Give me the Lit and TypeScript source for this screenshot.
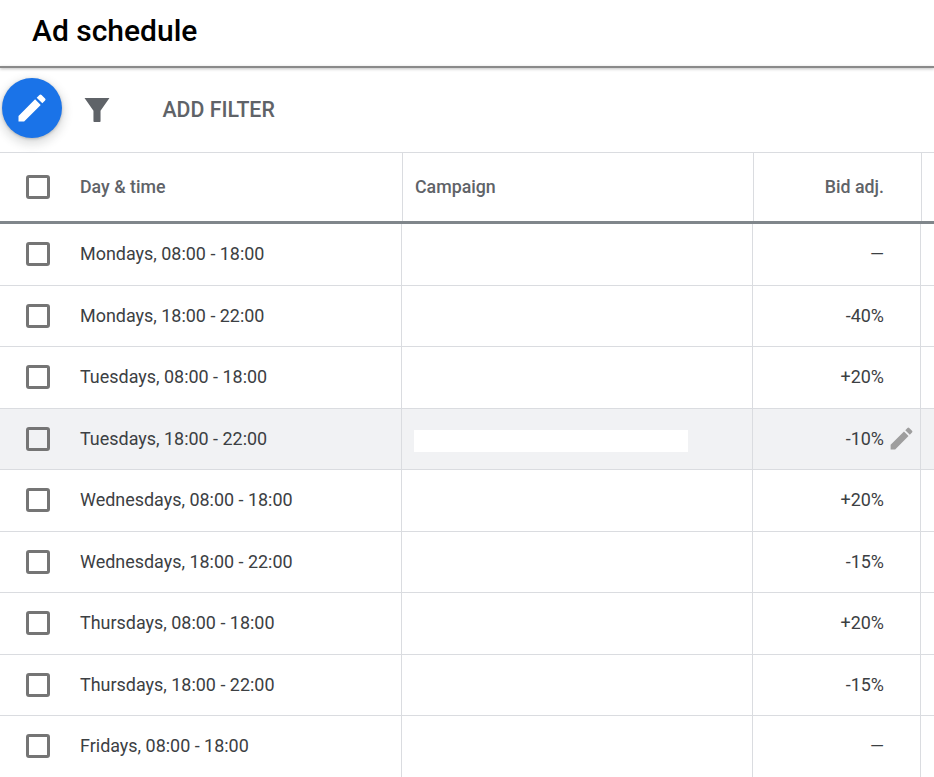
import { LitElement, html, css, svg } from "lit";
import { customElement } from "lit/decorators.js";

const PENCIL = "M3 17.25V21h3.75L17.81 9.94l-3.75-3.75L3 17.25zM20.71 7.04a1 1 0 0 0 0-1.41l-2.34-2.34a1 1 0 0 0-1.41 0l-1.83 1.83 3.75 3.75 1.83-1.83z";
const pencil = (cls: string) => html`<svg class=${cls} viewBox="0 0 24 24">${svg`<path d=${PENCIL}></path>`}</svg>`;

const ROWS: [string, string][] = [
  ["Mondays, 08:00 - 18:00", "—"],
  ["Mondays, 18:00 - 22:00", "-40%"],
  ["Tuesdays, 08:00 - 18:00", "+20%"],
  ["Tuesdays, 18:00 - 22:00", "-10%"],
  ["Wednesdays, 08:00 - 18:00", "+20%"],
  ["Wednesdays, 18:00 - 22:00", "-15%"],
  ["Thursdays, 08:00 - 18:00", "+20%"],
  ["Thursdays, 18:00 - 22:00", "-15%"],
  ["Fridays, 08:00 - 18:00", "—"],
];

@customElement("app-root")
export class AppRoot extends LitElement {
  static styles = css`
    :host { display: block; width: 934px; height: 777px; overflow: hidden; background: #fff; font-family: Roboto, "Liberation Sans", sans-serif; color: #3c4043; }
    .title { height: 66px; box-sizing: border-box; padding: 13px 0 0 32px; font-size: 30px; line-height: 36px; font-weight: 500; color: #000; }
    .rule { height: 2px; background: #8a8a8a; box-shadow: 0 1px 3px rgba(0,0,0,.3); position: relative; }
    .toolbar { height: 84px; display: flex; align-items: center; border-bottom: 1px solid #dadce0; }
    .fab { width: 60px; height: 60px; margin: -4px 0 0 2px; border-radius: 50%; background: #1a73e8; display: flex; align-items: center; justify-content: center; box-shadow: 0 4px 8px 3px rgba(60,64,67,.15), 0 1px 3px rgba(60,64,67,.3); flex: none; }
    .fab svg { width: 36px; height: 36px; fill: #fff; }
    .funnel { width: 34px; height: 34px; fill: #5f6368; margin-left: 18px; flex: none; }
    .add { margin-left: 48.5px; padding-bottom: 2px; font-size: 21.3px; font-weight: 500; color: #5f6368; }
    .head, .row { display: grid; }
    .head { grid-template-columns: 403px 351px 168px 12px; height: 68px; border-bottom: 3px solid #80868b; font-size: 17.8px; font-weight: 500; color: #5f6368; }
    .cell { box-sizing: border-box; display: flex; align-items: center; border-right: 1px solid #dadce0; min-width: 0; }
    .cell.last { border-right: 0; }
    .first { padding-left: 26px; gap: 30px; }
    .second { padding-left: 12px; }
    .num { justify-content: flex-end; padding-right: 37px; position: relative; }
    .head .label, .head .num { padding-bottom: 2px; }
    .row { height: 61.5px; box-sizing: border-box; border-bottom: 1px solid #dadce0; grid-template-columns: 402px 351px 168px 13px; font-size: 17.95px; color: #3c4043; font-weight: 400; }
    .row .label, .row .num { padding-bottom: 1px; }
    .row .num { padding-right: 36px; }
    .row.hover { background: #f1f2f4; }
    .box { width: 18px; height: 18px; border: 3px solid #757575; border-radius: 3px; flex: none; }
    .blank { width: 274px; height: 22px; background: #fff; margin-top: 4px; }
    .edit { position: absolute; right: 4.5px; top: 50%; margin-top: -14.5px; width: 29px; height: 29px; fill: #9e9e9e; }
  `;

  render() {
    return html`
      <div class="title">Ad schedule</div>
      <div class="rule"></div>
      <div class="toolbar">
        <div class="fab">${pencil("")}</div>
        <svg class="funnel" viewBox="0 0 24 24"><path d="M3.2 3.5h17.6L14.5 12.5V20a.5.5 0 0 1-.5.5h-4a.5.5 0 0 1-.5-.5V12.5z"></path></svg>
        <div class="add">ADD FILTER</div>
      </div>
      <div class="head">
        <div class="cell first"><span class="box"></span><span class="label">Day &amp; time</span></div>
        <div class="cell second"><span class="label">Campaign</span></div>
        <div class="cell num">Bid adj.</div>
        <div class="cell last"></div>
      </div>
      <div class="body">
        ${ROWS.map(([day, bid], i) => html`
          <div class="row ${i === 3 ? "hover" : ""}">
            <div class="cell first"><span class="box"></span><span class="label">${day}</span></div>
            <div class="cell second">${i === 3 ? html`<div class="blank"></div>` : ""}</div>
            <div class="cell num">${bid}${i === 3 ? pencil("edit") : ""}</div>
            <div class="cell last"></div>
          </div>`)}
      </div>
    `;
  }
}
